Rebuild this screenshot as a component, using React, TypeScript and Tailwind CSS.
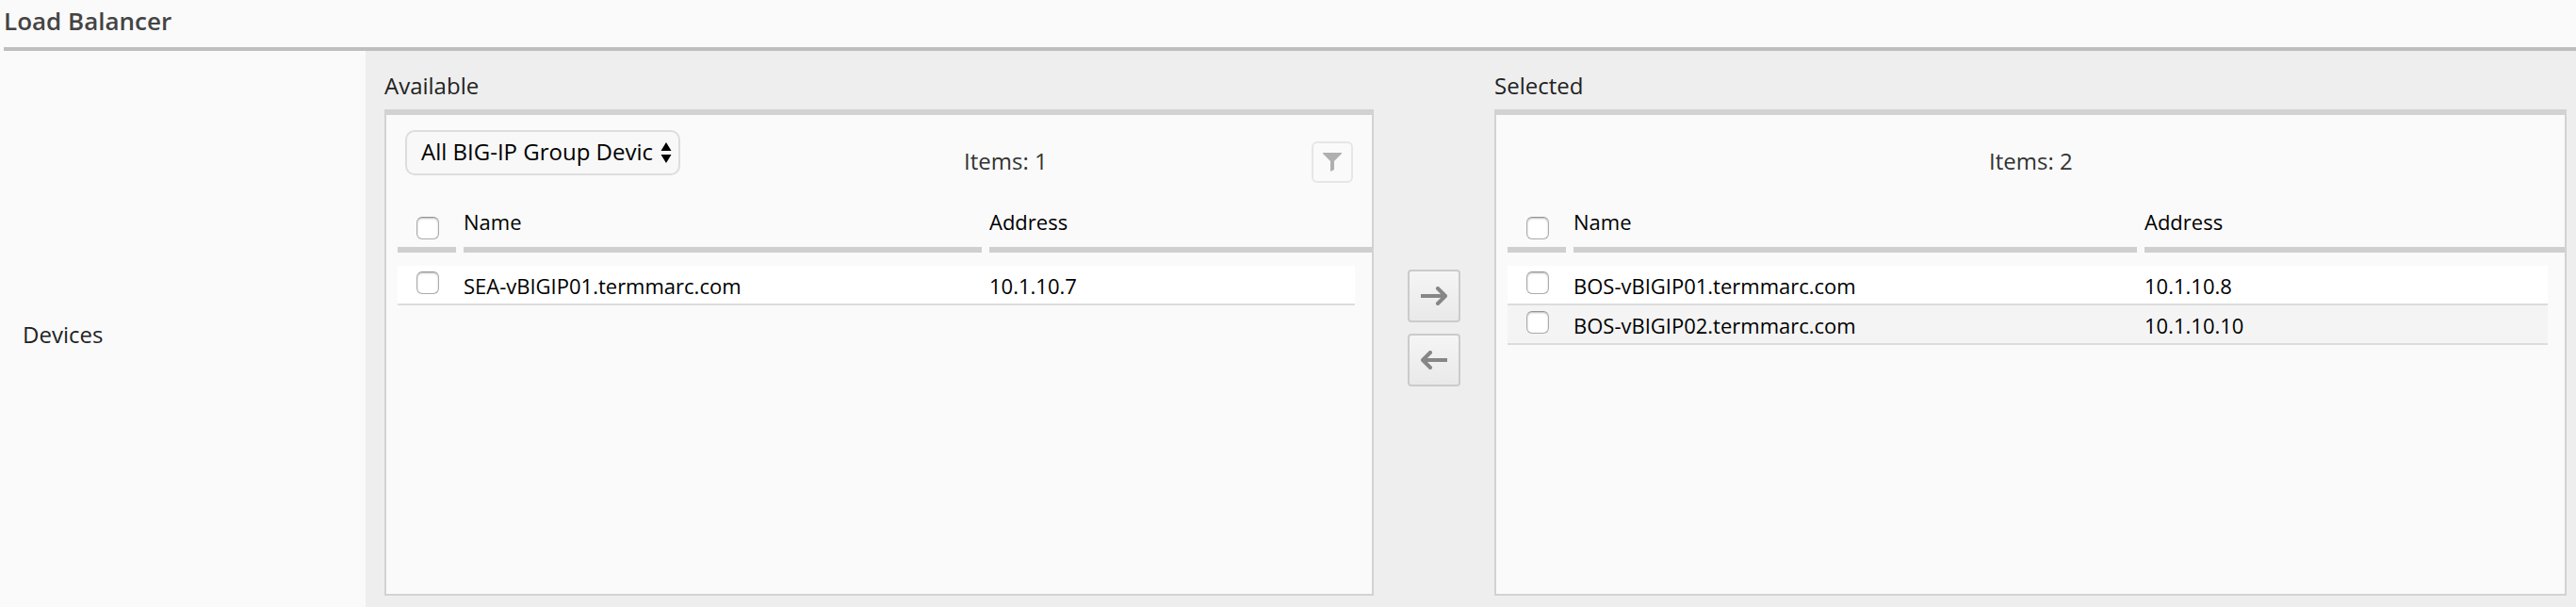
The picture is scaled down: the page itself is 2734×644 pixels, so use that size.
import React from "react";

type Device = { name: string; address: string };

const available: Device[] = [{ name: "SEA-vBIGIP01.termmarc.com", address: "10.1.10.7" }];
const selected: Device[] = [
  { name: "BOS-vBIGIP01.termmarc.com", address: "10.1.10.8" },
  { name: "BOS-vBIGIP02.termmarc.com", address: "10.1.10.10" },
];

function Checkbox({ label }: { label: string }) {
  return (
    <input
      type="checkbox"
      aria-label={label}
      className="block size-6 shrink-0 appearance-none rounded-[6px] border border-[#acacac] border-t-[#949494] bg-white shadow-[inset_0_1px_2px_#bcbcbc]"
    />
  );
}

function DeviceTable({ devices, columns }: { devices: Device[]; columns: string }) {
  return (
    <div className="pl-3 text-[22px] leading-8 text-black">
      <div className={`grid h-[62px] gap-x-2 ${columns}`}>
        <div className="border-b-[6px] border-[#cfcfcf] pt-6 pl-5">
          <Checkbox label="Select all" />
        </div>
        <div className="border-b-[6px] border-[#cfcfcf] pt-[13px]">Name</div>
        <div className="border-b-[6px] border-[#cfcfcf] pt-[13px]">Address</div>
      </div>
      <div className="mt-[14px] mr-[18px]">
        {devices.map((d) => (
          <div
            key={d.name}
            className={`grid h-[42px] gap-x-2 border-b-2 border-[#dcdcdc] bg-white even:bg-[#f4f4f4] ${columns}`}
          >
            <div className="pt-[6px] pl-5">
              <Checkbox label={d.name} />
            </div>
            <div className="pt-[5px]">{d.name}</div>
            <div className="pt-[5px]">{d.address}</div>
          </div>
        ))}
      </div>
    </div>
  );
}

function MoveButton({ left, label }: { left?: boolean; label: string }) {
  return (
    <button
      aria-label={label}
      className="flex size-14 items-center justify-center rounded-[4px] border-2 border-[#cbcbcb] bg-linear-to-b from-[#f5f5f5] to-[#e9e9e9]"
    >
      <svg width="28" height="20" viewBox="0 0 28 20" fill="none" stroke="#868686" strokeWidth="4" className={left ? "-scale-x-100" : ""}>
        <path d="M0 10H25" />
        <path d="M18 2L26 10L18 18" strokeLinejoin="round" strokeLinecap="round" />
      </svg>
    </button>
  );
}

export default function App() {
  return (
    <div className="flex h-[644px] w-[2734px] flex-col overflow-hidden bg-[#fafafa] font-['Open_Sans',sans-serif] text-2xl leading-8 text-[#222]">
      <header className="ml-1 h-[54px] border-b-4 border-[#bebebe] pt-[6px]">
        <h1 className="text-[26px] leading-8 font-semibold text-[#444]">Load Balancer</h1>
      </header>
      <div className="flex flex-1">
        <div className="w-[388px] pt-[285px] pl-6">Devices</div>
        <div className="flex flex-1 bg-[#eeeeee] pl-5">
          <section className="w-[1050px] pt-[21px]">
            <h2 className="h-[41px]">Available</h2>
            <div className="h-[516px] border-2 border-t-[6px] border-[#d2d2d2] bg-[#fafafa]">
              <div className="flex h-[84px] items-start pl-5">
                <button className="mt-4 flex h-12 w-[292px] items-center rounded-[10px] border-2 border-[#dddddd] bg-[#f8f8f8] pl-[15px] text-black">
                  <span className="w-[247px] overflow-hidden pb-[2px] text-left whitespace-nowrap">All BIG-IP Group Devic</span>
                  <svg width="12" height="22" viewBox="0 0 12 22" className="ml-[7px]">
                    <path d="M6 0L11.5 9H0.5ZM6 22L0.5 13H11.5Z" fill="#000" />
                  </svg>
                </button>
                <div className="mt-[33px] ml-[301px] w-[369px] text-[#333]">Items: 1</div>
                <button aria-label="Filter" className="mt-7 flex size-11 justify-center rounded-[6px] border-2 border-[#e6e6e6] pt-[10px]">
                  <svg width="20" height="20" viewBox="0 0 20 20">
                    <path d="M0 0H20V1L12 9V18L8 20V9L0 1Z" fill="#b0b0b0" />
                  </svg>
                </button>
              </div>
              <DeviceTable devices={available} columns="grid-cols-[62px_550px_1fr]" />
            </div>
          </section>
          <div className="flex w-32 flex-col items-center gap-3 pt-[232px]">
            <MoveButton label="Add to selected" />
            <MoveButton left label="Remove from selected" />
          </div>
          <section className="w-[1138px] pt-[21px]">
            <h2 className="h-[41px]">Selected</h2>
            <div className="h-[516px] border-2 border-t-[6px] border-[#d2d2d2] bg-[#fafafa]">
              <div className="h-[84px] pt-[33px] pl-[523px] text-[#333]">Items: 2</div>
              <DeviceTable devices={selected} columns="grid-cols-[62px_598px_1fr]" />
            </div>
          </section>
        </div>
      </div>
    </div>
  );
}
